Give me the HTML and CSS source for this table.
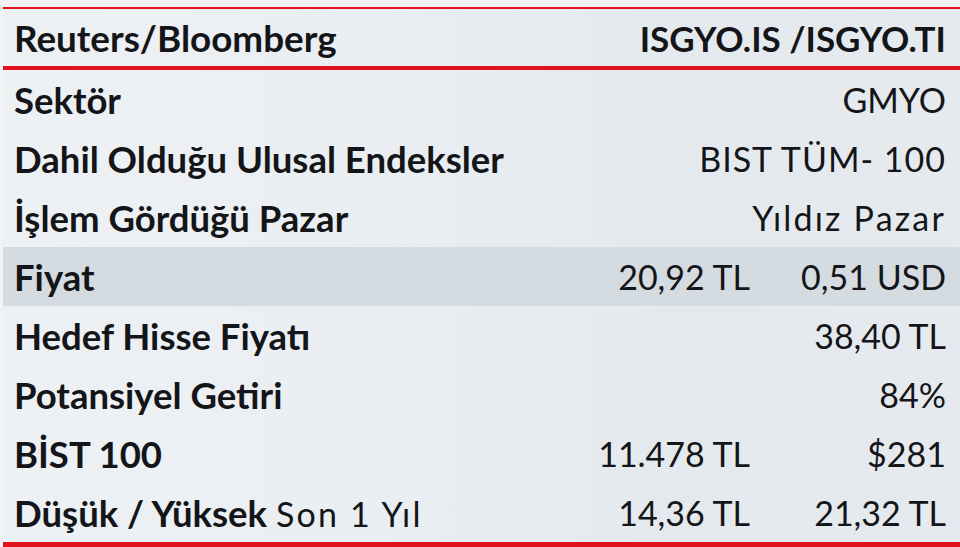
FILE: index.html
```html
<!DOCTYPE html>
<html lang="tr">
<head>
<meta charset="utf-8">
<title>ISGYO</title>
<link rel="stylesheet" href="styles.css">
</head>
<body>
<div class="sheet">
  <div class="table">
    <div class="row head">
      <div class="label">Reuters/Bloomberg</div>
      <div class="val span">ISGYO.IS /ISGYO.TI</div>
    </div>
    <div class="row">
      <div class="label">Sektör</div>
      <div class="val span reg">GMYO</div>
    </div>
    <div class="row">
      <div class="label">Dahil Olduğu Ulusal Endeksler</div>
      <div class="val span reg wide1">BIST TÜM- 100</div>
    </div>
    <div class="row">
      <div class="label">İşlem Gördüğü Pazar</div>
      <div class="val span reg wide2">Yıldız Pazar</div>
    </div>
    <div class="row shade">
      <div class="label">Fiyat</div>
      <div class="val reg">20,92 TL</div>
      <div class="val reg">0,51 USD</div>
    </div>
    <div class="row">
      <div class="label">Hedef Hisse Fiyatı</div>
      <div class="val span reg">38,40 TL</div>
    </div>
    <div class="row">
      <div class="label">Potansiyel Getiri</div>
      <div class="val span reg">84%</div>
    </div>
    <div class="row">
      <div class="label">BİST 100</div>
      <div class="val reg">11.478 TL</div>
      <div class="val reg">$281</div>
    </div>
    <div class="row last">
      <div class="label">Düşük / Yüksek <span class="reg wide3">Son 1 Yıl</span></div>
      <div class="val reg">14,36 TL</div>
      <div class="val reg">21,32 TL</div>
    </div>
  </div>
</div>
</body>
</html>
```
FILE: styles.css
```css
html, body {
  margin: 0;
  padding: 0;
}
body {
  width: 960px;
  height: 547px;
  overflow: hidden;
  background: #f1f2f4;
  font-family: Lato, "Open Sans", sans-serif;
  color: #141518;
}
.sheet {
  padding-top: 7px;
  padding-left: 3px;
}
.table {
  border-top: 2px solid #e1121b;
  border-bottom: 6px solid #e1121b;
  background: linear-gradient(90deg, #eef1f4 0%, #eaeef2 40%, #e4e9ee 70%, #e6eaee 100%);
}
.row {
  display: grid;
  grid-template-columns: 1fr 200px 196px;
  align-items: center;
  height: 59px;
  padding: 0 14px 0 11px;
  font-size: 36.5px;
  font-weight: 700;
  white-space: nowrap;
}
.row.head {
  height: 57px;
  border-bottom: 4px solid #e1121b;
}
.row.head .label {
  font-size: 36.8px;
}
.row.head .val {
  font-size: 35px;
}
.row.shade {
  background: #d4dbe1;
}
.label {
  grid-column: 1;
}
.val {
  text-align: right;
}
.val.span {
  grid-column: 2 / 4;
}
.reg {
  font-weight: 400;
  font-size: 34px;
}
.wide1 {
  letter-spacing: 1px;
}
.wide2 {
  letter-spacing: 2.2px;
}
.wide3 {
  letter-spacing: 2.2px;
}
```
